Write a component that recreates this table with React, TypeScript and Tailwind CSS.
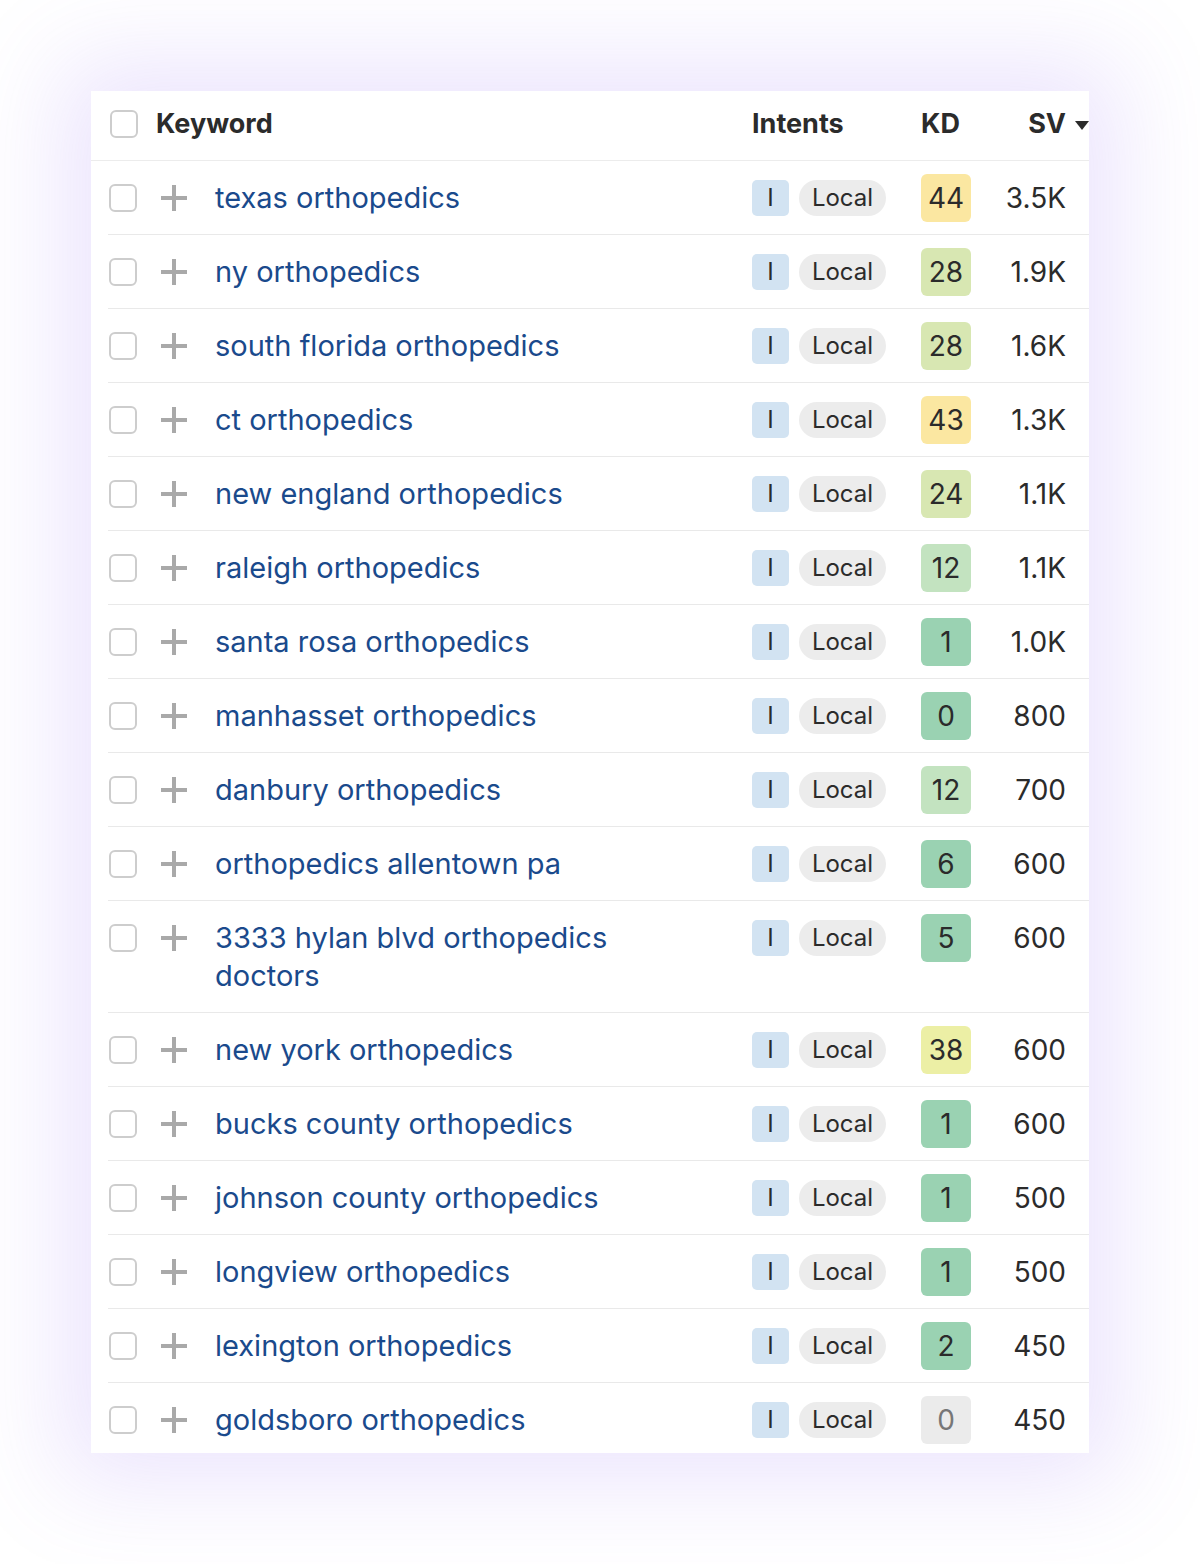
import React from "react";

type Row = { kw: string; kd: number; sv: string; gray?: boolean };

const rows: Row[] = [
  { kw: "texas orthopedics", kd: 44, sv: "3.5K" },
  { kw: "ny orthopedics", kd: 28, sv: "1.9K" },
  { kw: "south florida orthopedics", kd: 28, sv: "1.6K" },
  { kw: "ct orthopedics", kd: 43, sv: "1.3K" },
  { kw: "new england orthopedics", kd: 24, sv: "1.1K" },
  { kw: "raleigh orthopedics", kd: 12, sv: "1.1K" },
  { kw: "santa rosa orthopedics", kd: 1, sv: "1.0K" },
  { kw: "manhasset orthopedics", kd: 0, sv: "800" },
  { kw: "danbury orthopedics", kd: 12, sv: "700" },
  { kw: "orthopedics allentown pa", kd: 6, sv: "600" },
  { kw: "3333 hylan blvd orthopedics doctors", kd: 5, sv: "600" },
  { kw: "new york orthopedics", kd: 38, sv: "600" },
  { kw: "bucks county orthopedics", kd: 1, sv: "600" },
  { kw: "johnson county orthopedics", kd: 1, sv: "500" },
  { kw: "longview orthopedics", kd: 1, sv: "500" },
  { kw: "lexington orthopedics", kd: 2, sv: "450" },
  { kw: "goldsboro orthopedics", kd: 0, sv: "450", gray: true },
];

function kdClass(kd: number, gray?: boolean) {
  if (gray) return "bg-[#ebebeb] text-[#777777]";
  if (kd >= 40) return "bg-[#fbe7a1] text-[#2b2b2b]";
  if (kd >= 30) return "bg-[#ecefa5] text-[#2b2b2b]";
  if (kd >= 20) return "bg-[#d8e7b2] text-[#2b2b2b]";
  if (kd >= 10) return "bg-[#c3e3c0] text-[#2b2b2b]";
  return "bg-[#9ad2b2] text-[#2b2b2b]";
}

function Checkbox() {
  return <div className="w-[28px] h-[28px] rounded-[6px] border-2 border-[#cdcdcd] bg-white shrink-0" />;
}

function Plus() {
  return (
    <svg width="26" height="26" viewBox="0 0 26 26" className="shrink-0">
      <rect x="11" y="0" width="4" height="26" fill="#a9a9a9" />
      <rect x="0" y="11" width="26" height="4" fill="#a9a9a9" />
    </svg>
  );
}

export default function App() {
  return (
    <div className="w-[1200px] h-[1564px] bg-white pt-[91px] pl-[91px]" style={{ fontFamily: "Inter, 'Noto Sans', sans-serif" }}>
      <div className="w-[998px] bg-white shadow-[0_0_90px_30px_rgba(140,100,245,0.17)]">
        <div className="h-[70px] pb-[3px] flex items-center border-b border-[#ececec] text-[#2b2b2b] font-bold text-[27px]">
          <div className="ml-[19px]"><Checkbox /></div>
          <div className="ml-[18px] w-[596px]">Keyword</div>
          <div className="w-[169px]">Intents</div>
          <div className="flex-1">KD</div>
          <div className="flex items-center">
            <span>SV</span>
            <svg width="14" height="10" viewBox="0 0 14 10" className="ml-[9px] mt-[4px]">
              <polygon points="0,0 14,0 7,9" fill="#2b2b2b" />
            </svg>
          </div>
        </div>
        <div className="ml-[17px]">
          {rows.map((r, i) => {
            const last = i === rows.length - 1;
            return (
              <div
                key={i}
                className={`flex items-start pt-[18px] ${last ? "pb-[14px]" : "pb-[17px] border-b border-[#e9e9e9]"}`}
              >
                <div className="ml-[1px] mt-[5px]"><Checkbox /></div>
                <div className="ml-[24px] h-[38px] flex items-center"><Plus /></div>
                <div className="ml-[28px] w-[480px] text-[29px] leading-[38px] text-[#1a4a8c]">{r.kw}</div>
                <div className="ml-[57px] flex items-center gap-[10px] mt-[1px]">
                  <div className="w-[37px] h-[36px] rounded-[5px] bg-[#d2e3f2] flex items-center justify-center text-[24px] text-[#2b2b2b]">I</div>
                  <div className="w-[87px] h-[36px] rounded-full bg-[#ececec] flex items-center justify-center text-[24px] text-[#2b2b2b]">Local</div>
                </div>
                <div className={`ml-[35px] -my-[5px] w-[50px] h-[48px] rounded-[6px] flex items-center justify-center text-[28px] ${kdClass(r.kd, r.gray)}`}>{r.kd}</div>
                <div className="flex-1 text-right pr-[23px] text-[28px] leading-[38px] text-[#2b2b2b]">{r.sv}</div>
              </div>
            );
          })}
        </div>
      </div>
    </div>
  );
}
